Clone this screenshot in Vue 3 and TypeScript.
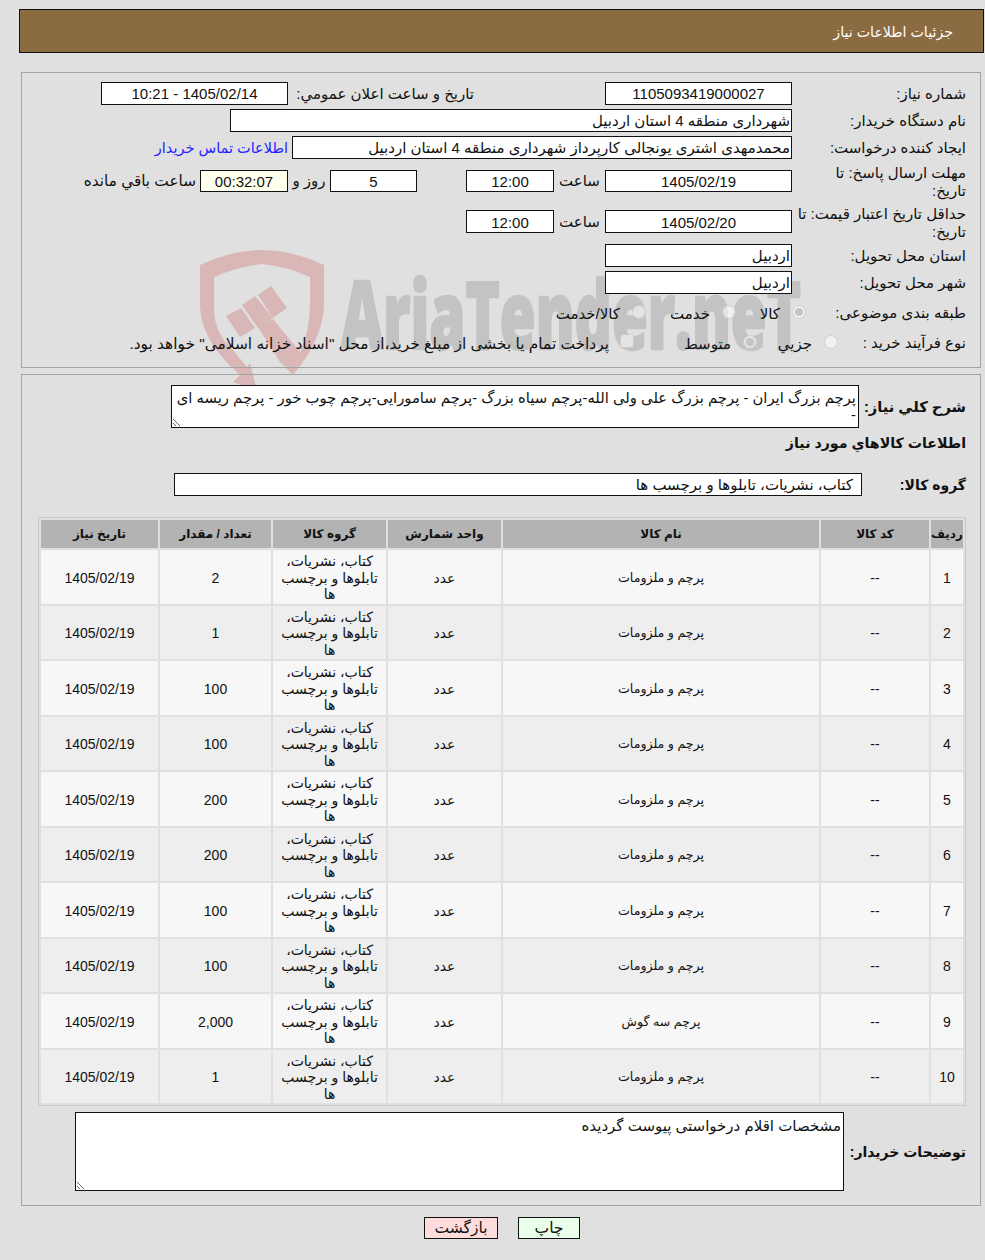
<script setup lang="ts">
const rows = [
  { id: 1, name: 'پرچم و ملزومات', qty: '2' },
  { id: 2, name: 'پرچم و ملزومات', qty: '1' },
  { id: 3, name: 'پرچم و ملزومات', qty: '100' },
  { id: 4, name: 'پرچم و ملزومات', qty: '100' },
  { id: 5, name: 'پرچم و ملزومات', qty: '200' },
  { id: 6, name: 'پرچم و ملزومات', qty: '200' },
  { id: 7, name: 'پرچم و ملزومات', qty: '100' },
  { id: 8, name: 'پرچم و ملزومات', qty: '100' },
  { id: 9, name: 'پرچم سه گوش', qty: '2,000' },
  { id: 10, name: 'پرچم و ملزومات', qty: '1' },
]

const description =
  'پرچم بزرگ ایران - پرچم بزرگ علی ولی الله-پرچم سیاه بزرگ -پرچم سامورایی-پرچم چوب خور - پرچم ریسه ای -'
</script>

<template>
  <div class="page" dir="rtl">
    <header class="title-bar">جزئیات اطلاعات نیاز</header>

    <!-- watermark sits behind the panels, fields are opaque over it -->
    <svg class="watermark" width="640" height="150" viewBox="190 240 640 150" aria-hidden="true">
      <g fill="#d9b7b7">
        <path d="M200 265 Q232 250 262 250 Q292 250 324 265 L324 305 Q323 335 300 366 L293 375 L300 352 Q310 330 310 305 L310 277 Q288 267 262 264 Q238 267 214 277 L214 312 Q216 335 233 350 L247 367 L250 363 L257 390 L233 382 L240 375 Q200 340 200 305 Z" />
        <path d="M258 327 L273 319 L300 352 L293 375 L280 362 Z" />
        <path d="M226 316 L241 308 L255 328 L240 337 Z" />
        <path d="M242 305 L255 296 L273 318 L258 328 Z" />
        <path d="M258 295 L271 286 L287 308 L273 318 Z" />
      </g>
      <text x="341" y="349" class="wm-text" textLength="460" lengthAdjust="spacingAndGlyphs">AriaTender.neT</text>
    </svg>

    <section class="panel info">
      <div class="row">
        <label class="lbl">شماره نیاز:</label>
        <div class="field w-date ctr">1105093419000027</div>
        <span class="txt announce">تاريخ و ساعت اعلان عمومي:</span>
        <div class="field w-date ctr">1405/02/14 - 10:21</div>
      </div>
      <div class="row">
        <label class="lbl">نام دستگاه خریدار:</label>
        <div class="field w-buyer">شهرداری منطقه 4 استان اردبیل</div>
      </div>
      <div class="row">
        <label class="lbl">ایجاد کننده درخواست:</label>
        <div class="field w-creator">محمدمهدی اشتری یونجالی کارپرداز شهرداری منطقه 4 استان اردبیل</div>
        <a class="link">اطلاعات تماس خریدار</a>
      </div>
      <div class="row tall">
        <label class="lbl">مهلت ارسال پاسخ: تا<br />تاریخ:</label>
        <div class="field w-date ctr">1405/02/19</div>
        <span class="txt hour">ساعت</span>
        <div class="field w-time ctr">12:00</div>
        <div class="field w-days ctr">5</div>
        <span class="txt days">روز و</span>
        <div class="field w-time ctr remain">00:32:07</div>
        <span class="txt left-lbl">ساعت باقي مانده</span>
      </div>
      <div class="row tall second">
        <label class="lbl">حداقل تاریخ اعتبار قیمت: تا<br />تاریخ:</label>
        <div class="field w-date ctr">1405/02/20</div>
        <span class="txt hour">ساعت</span>
        <div class="field w-time ctr">12:00</div>
      </div>
      <div class="row place">
        <label class="lbl">استان محل تحویل:</label>
        <div class="field w-date">اردبیل</div>
      </div>
      <div class="row">
        <label class="lbl">شهر محل تحویل:</label>
        <div class="field w-date">اردبیل</div>
      </div>
      <div class="row choices cat">
        <label class="lbl">طبقه بندی موضوعی:</label>
        <span class="radio on"></span><span class="opt o-kala">کالا</span>
        <span class="radio"></span><span class="opt o-khed">خدمت</span>
        <span class="radio"></span><span class="opt">کالا/خدمت</span>
      </div>
      <div class="row choices proc">
        <label class="lbl">نوع فرآیند خرید :</label>
        <span class="radio"></span><span class="opt o-jozi">جزيي</span>
        <span class="radio on"></span><span class="opt o-mid">متوسط</span>
        <span class="check"></span><span class="opt o-pay">پرداخت تمام یا بخشی از مبلغ خرید،از محل "اسناد خزانه اسلامی" خواهد بود.</span>
      </div>
    </section>

    <section class="panel main">
      <div class="row desc">
        <label class="lbl-b">شرح كلي نياز:</label>
        <textarea class="area a-desc" readonly :value="description"></textarea>
      </div>
      <h2 class="goods-title">اطلاعات کالاهاي مورد نياز</h2>
      <div class="row group">
        <label class="lbl-b">گروه کالا:</label>
        <div class="field w-group">کتاب، نشریات، تابلوها و برچسب ها</div>
      </div>

      <table class="goods">
        <thead>
          <tr>
            <th class="c-id">رديف</th>
            <th class="c-code">کد کالا</th>
            <th class="c-name">نام کالا</th>
            <th class="c-unit">واحد شمارش</th>
            <th class="c-group">گروه کالا</th>
            <th class="c-qty">تعداد / مقدار</th>
            <th>تاریخ نیاز</th>
          </tr>
        </thead>
        <tbody>
          <tr v-for="row in rows" :key="row.id">
            <td>{{ row.id }}</td>
            <td>--</td>
            <td class="name">{{ row.name }}</td>
            <td>عدد</td>
            <td>کتاب، نشریات، تابلوها و برچسب ها</td>
            <td>{{ row.qty }}</td>
            <td>1405/02/19</td>
          </tr>
        </tbody>
      </table>

      <div class="row notes">
        <label class="lbl-b">توضیحات خریدار:</label>
        <textarea class="area a-notes" readonly value="مشخصات اقلام درخواستی پیوست گردیده"></textarea>
      </div>
    </section>

    <div class="actions">
      <button class="btn print">چاپ</button>
      <button class="btn back">بازگشت</button>
    </div>
  </div>
</template>

<style scoped>
.page {
  position: relative;
  height: 1260px;
  box-sizing: border-box;
  padding: 9px 1px 0 0;
  background: #e0e0e0;
  font-family: "Liberation Sans", "DejaVu Sans", sans-serif;
  font-size: 15px;
  color: #111;
  overflow: hidden;
}

.title-bar {
  height: 44px;
  margin-left: 19px;
  box-sizing: border-box;
  border: 1px solid #111;
  background: #8b6b42;
  color: #fff;
  padding: 12px 30px 0 0;
  font-size: 14.2px;
  line-height: 20px;
}

.watermark {
  position: absolute;
  left: 190px;
  top: 240px;
  direction: ltr;
}
.wm-text {
  font-family: "Open Sans", sans-serif;
  font-weight: 800;
  font-size: 94px;
  fill: #c3c3c3;
  stroke: #c3c3c3;
  stroke-width: 2.5px;
  stroke-linejoin: round;
}

.panel {
  position: relative;
  margin: 0 3px 0 21px;
  border: 1px solid #a3a3a3;
  box-sizing: border-box;
}
.info {
  margin-top: 19px;
  height: 296px;
  padding: 9px 14px 0 0;
}
.main {
  margin-top: 6px;
  height: 832px;
  padding: 10px 14px 0 0;
}

.row {
  display: flex;
  align-items: center;
  height: 23px;
  margin-bottom: 4px;
}
.lbl {
  width: 174px;
  flex: none;
  line-height: 18px;
  white-space: nowrap;
}
.field {
  flex: none;
  height: 23px;
  box-sizing: border-box;
  border: 1px solid #111;
  background: #fff;
  padding: 0 1px;
  line-height: 22px;
  white-space: nowrap;
  overflow: hidden;
}
.ctr { text-align: center; }
.w-date { width: 187px; }
.w-buyer { width: 562px; }
.w-creator { width: 500px; }
.w-time { width: 88px; }
.w-days { width: 87px; margin-right: 49px; }
.w-group { width: 688px; padding-right: 8px; }
.remain { background: #ffffee; }
.txt { white-space: nowrap; flex: none; }
.announce { width: 186px; margin-right: 131px; }
.link { color: #1f1fff; margin-right: 4px; font-size: 14.5px; }
.hour { width: 51px; text-align: center; }
.days { width: 42px; text-align: center; }
.left-lbl { margin-right: 4px; font-size: 15.3px; }
.tall { height: 22px; margin-top: 11px; margin-bottom: 0; }
.tall .field { height: 22px; }
.tall .lbl { padding-top: 2px; }
.second { margin-top: 18px; height: 23px; }
.second .field { height: 23px; line-height: 24px; }
.second .txt { padding-top: 1px; }
.place { margin-top: 11px; }

.choices { margin-bottom: 0; }
.cat { margin-top: 7px; }
.proc { margin-top: 7px; }
.cat .lbl { width: 160px; }
.proc .lbl { width: 128px; }
.radio, .check {
  flex: none;
  width: 14px;
  height: 14px;
  box-sizing: border-box;
  border: 1px solid rgba(170, 170, 170, 0.45);
  border-radius: 50%;
  background: rgba(255, 255, 255, 0.55);
  margin-left: 12px;
  margin-top: -2px;
  position: relative;
}
.check { border-radius: 3px; margin-left: 11px; margin-top: -4px; }
.radio.on::after {
  content: "";
  position: absolute;
  left: 2px;
  top: 2px;
  width: 8px;
  height: 8px;
  border-radius: 50%;
  background: #c4c4c4;
}
.opt { white-space: nowrap; flex: none; margin-top: 2px; }
.o-kala { width: 44px; }
.o-khed { width: 64px; }
.o-jozi { width: 55px; }
.o-mid { width: 97px; }
.o-pay { font-size: 15.4px; }

.lbl-b {
  flex: none;
  font-weight: 700;
  font-size: 14px;
  white-space: nowrap;
}
.desc {
  height: 43px;
  margin-bottom: 0;
}
.desc .lbl-b { width: 107px; font-size: 14.7px; }
.area {
  display: block;
  flex: none;
  box-sizing: border-box;
  border: 1px solid #111;
  background: #fff;
  color: #111;
  font: 15px/17px "Liberation Sans", "DejaVu Sans", sans-serif;
  outline: none;
  margin: 0;
  border-radius: 0;
  overflow: hidden;
}
.a-desc {
  width: 688px;
  height: 43px;
  padding: 4px 2px 1px;
  font-size: 14.8px;
}
.goods-title {
  margin: 5px 0 0 0;
  font-size: 14.2px;
  line-height: 21px;
  font-weight: 700;
}
.group {
  margin-top: 19px;
  margin-bottom: 21px;
}
.group .lbl-b { width: 104px; }

.goods {
  width: 928px;
  margin: 0;
  table-layout: fixed;
  border-collapse: separate;
  border-spacing: 2px;
  border: 1px solid #c8c8c8;
  font-size: 14px;
}
.goods th {
  height: 28px;
  padding: 0;
  background: #b3b3b3;
  font-weight: 700;
  font-size: 12px;
}
.goods td {
  height: 53.5px;
  box-sizing: border-box;
  padding: 2px 6px 0;
  text-align: center;
  line-height: 16.5px;
  background: #f7f7f7;
}
.goods td.name { font-size: 12.6px; }
.goods tbody tr:nth-child(even) td { background: #eeeeee; }
.c-id { width: 32px; }
.c-code { width: 108px; }
.c-name { width: 316px; }
.c-unit { width: 113px; }
.c-group { width: 113px; }
.c-qty { width: 111px; }

.notes {
  height: 79px;
  margin-top: 6px;
}
.notes .lbl-b { width: 122px; }
.a-notes {
  width: 769px;
  height: 79px;
  padding: 4px 2px 1px;
}

.actions {
  display: flex;
  justify-content: center;
  gap: 20px;
  margin-top: 11px;
  padding-left: 20px;
}
.btn {
  height: 22px;
  box-sizing: border-box;
  border: 1px solid #111;
  border-radius: 0;
  padding: 0;
  color: #111;
  font: 15.5px "DejaVu Sans", sans-serif;
}
.print { width: 62px; background: #eaffea; }
.back { width: 74px; background: #ffdcdc; }
</style>

<style>
html, body { background: #e0e0e0; }
</style>
